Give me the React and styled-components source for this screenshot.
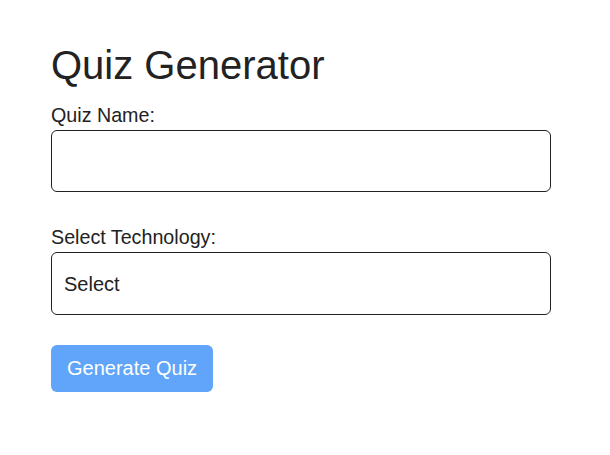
import React from "react";
import styled, { createGlobalStyle } from "styled-components";

const Global = createGlobalStyle`
  html, body { margin: 0; padding: 0; background: #fff; }
  body { font-family: "Liberation Sans", Arial, sans-serif; color: #222; }
`;

const Page = styled.div`
  padding: 42px 59px 0 51px;
  width: 500px;
`;

const Title = styled.h1`
  margin: 0 0 16px;
  font-size: 40px;
  font-weight: 400;
  line-height: 46px;
`;

const Field = styled.div`
  display: flex;
  flex-direction: column;
  gap: 4px;
  margin-bottom: ${(p) => p.$mb || 0}px;
`;

const Label = styled.label`
  font-size: 19.7px;
  line-height: 22px;
`;

const TextInput = styled.input`
  box-sizing: border-box;
  width: 500px;
  height: 62px;
  border: 1px solid #222;
  border-radius: 6px;
  padding: 0 12px;
  font-family: inherit;
  font-size: 20px;
  color: #222;
  background: #fff;
  outline: none;
`;

const Select = styled.select`
  box-sizing: border-box;
  width: 500px;
  height: 63px;
  border: 1px solid #222;
  border-radius: 6px;
  padding: 0 12px;
  font-family: inherit;
  font-size: 20px;
  color: #222;
  background: #fff;
  appearance: none;
  outline: none;
`;

const Button = styled.button`
  box-sizing: border-box;
  height: 47px;
  padding: 0 16px;
  border: none;
  border-radius: 6px;
  background: #60a5fa;
  color: #fff;
  font-family: inherit;
  font-size: 20px;
  cursor: pointer;
`;

export default function App() {
  return (
    <>
      <Global />
      <Page>
        <Title>Quiz Generator</Title>
        <Field $mb={34}>
          <Label htmlFor="qn">Quiz Name:</Label>
          <TextInput id="qn" type="text" />
        </Field>
        <Field $mb={30}>
          <Label htmlFor="tech">Select Technology:</Label>
          <Select id="tech" defaultValue="">
            <option value="">Select</option>
            <option value="js">JavaScript</option>
            <option value="react">React</option>
          </Select>
        </Field>
        <Button>Generate Quiz</Button>
      </Page>
    </>
  );
}
